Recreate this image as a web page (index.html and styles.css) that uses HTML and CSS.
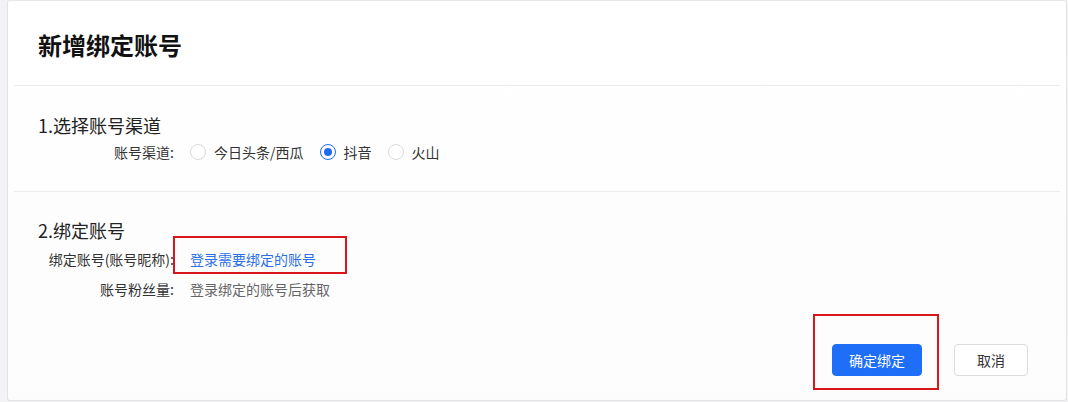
FILE: index.html
```html
<!DOCTYPE html>
<html lang="zh-CN">
<head>
<meta charset="utf-8">
<title>新增绑定账号</title>
<link rel="stylesheet" href="styles.css">
</head>
<body>
<div class="card">
  <div class="header"><h1 class="title">新增绑定账号</h1></div>
  <div class="section s1">
    <div class="sec-title">1.选择账号渠道</div>
    <div class="row">
      <div class="label">账号渠道:</div>
      <div class="radios">
        <label class="radio"><span class="dot"></span>今日头条/西瓜</label>
        <label class="radio checked"><span class="dot"></span>抖音</label>
        <label class="radio"><span class="dot"></span>火山</label>
      </div>
    </div>
  </div>
  <div class="section s2">
    <div class="sec-title">2.绑定账号</div>
    <div class="row r1">
      <div class="label">绑定账号(账号昵称):</div>
      <div class="value mark-wrap"><a class="link">登录需要绑定的账号</a><span class="mark mark-link"></span></div>
    </div>
    <div class="row">
      <div class="label">账号粉丝量:</div>
      <div class="value muted">登录绑定的账号后获取</div>
    </div>
  </div>
  <div class="footer">
    <div class="mark-wrap"><button class="btn primary">确定绑定</button><span class="mark mark-btn"></span></div>
    <button class="btn default">取消</button>
  </div>
</div>
</body>
</html>
```
FILE: styles.css
```css
* { box-sizing: border-box; }
html, body { margin: 0; padding: 0; }
body {
  background: #f3f3f5;
  font-family: "Noto Sans CJK SC", "Noto Sans", sans-serif;
  color: #333;
  width: 1068px;
  height: 402px;
  overflow: hidden;
}
.card {
  margin-left: 7px;
  width: 1060px;
  height: 401px;
  background: linear-gradient(#ffffff, #fcfcfc);
  border: 1px solid #e3e3e3;
  border-top-color: #e8e8e8;
  border-radius: 3px;
  display: flex;
  flex-direction: column;
}
.header {
  height: 85px;
  padding: 4px 0 0 24px;
  margin: 0 6px;
  border-bottom: 1px solid #ececec;
  display: flex;
  align-items: center;
}
.title {
  margin: 0;
  font-size: 24px;
  line-height: 30px;
  font-weight: 700;
  color: #111;
}
.section {
  margin: 0 6px;
  padding-left: 24px;
}
.s1 {
  padding-top: 27px;
  padding-bottom: 24px;
  border-bottom: 1px solid #ececec;
}
.s2 { padding-top: 26px; }
.sec-title {
  font-size: 18px;
  line-height: 24px;
  color: #222;
}
.row {
  display: flex;
  align-items: center;
  height: 30px;
  font-size: 14px;
}
.s2 .r1 { margin-top: 2px; }
.label {
  width: 136px;
  text-align: right;
  margin-right: 16px;
  color: #333;
  white-space: nowrap;
}
.radios { display: flex; align-items: center; gap: 16px; }
.radio { display: flex; align-items: center; gap: 8px; color: #333; }
.dot {
  width: 16px;
  height: 16px;
  border-radius: 50%;
  border: 1px solid #d9d9d9;
  background: #fff;
  display: flex;
  align-items: center;
  justify-content: center;
}
.radio.checked .dot { border-color: #1f6bf5; }
.radio.checked .dot::after {
  content: "";
  width: 8px;
  height: 8px;
  border-radius: 50%;
  background: #1f6bf5;
}
.value { color: #333; }
.link { color: #2a6fe8; cursor: pointer; }
.muted { color: #666; }
.mark-wrap { position: relative; }
.mark {
  position: absolute;
  border: 2px solid #d9161c;
  pointer-events: none;
}
.mark-link { left: -17px; top: -13px; width: 174px; height: 38px; }
.mark-btn { left: -19px; top: -30px; width: 126px; height: 76px; }
.footer {
  display: flex;
  justify-content: flex-end;
  gap: 32px;
  padding-top: 40px;
  padding-right: 38px;
}
.btn {
  height: 32px;
  font-family: inherit;
  font-size: 14px;
  border-radius: 4px;
  padding: 0;
  cursor: pointer;
}
.primary {
  width: 90px;
  background: #1e6ef8;
  border: 1px solid #1e6ef8;
  color: #fff;
  display: block;
}
.default {
  width: 74px;
  background: #fff;
  border: 1px solid #dcdcdc;
  color: #333;
}
```
